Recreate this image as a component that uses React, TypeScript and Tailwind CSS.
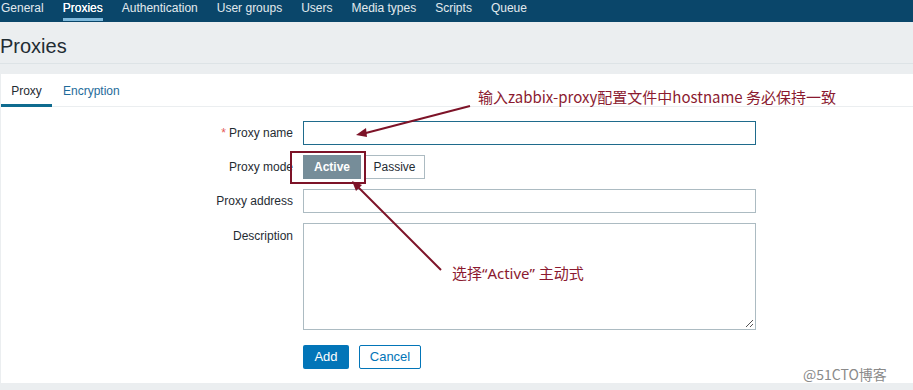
import React from "react";

const navItems = ["General", "Proxies", "Authentication", "User groups", "Users", "Media types", "Scripts", "Queue"];

export default function App() {
  return (
    <div
      className="relative w-[913px] h-[390px] overflow-hidden bg-[#ebeef0] text-[12px] text-[#1f2c33]"
      style={{ fontFamily: '"Liberation Sans", Arial, sans-serif' }}
    >
      {/* top nav */}
      <div className="h-[22px] bg-[#0a466a] flex items-stretch pl-[1px] gap-[19px]">
        {navItems.map((n) => (
          <div
            key={n}
            className={
              "relative flex items-start pt-[1px] leading-[14px] text-[12px] " +
              (n === "Proxies" ? "text-white [text-shadow:0_0_0.4px_#fff]" : "text-[#e2eaee]")
            }
          >
            {n}
            {n === "Proxies" && (
              <span className="absolute left-0 right-0 bottom-[1px] h-[3px] bg-[#7eb9db]" />
            )}
          </div>
        ))}
      </div>

      {/* title */}
      <div className="h-[42px] border-b border-[#dde3e6] flex items-center pt-[6px]">
        <h1 className="text-[20px] leading-[22px] text-[#1f2c33]">Proxies</h1>
      </div>

      {/* content */}
      <div className="mt-[10px] ml-[1px] h-[309px] bg-white">
        <div className="h-[33px] border-b border-[#ebeef0] flex items-stretch">
          <div className="relative w-[51px] flex items-center justify-center pt-[1px] text-[#1f2c33]">
            Proxy
            <span className="absolute left-0 right-0 bottom-[-1px] h-[3px] bg-[#0f6b8f]" />
          </div>
          <div className="px-[11px] flex items-center pt-[1px] text-[#1f6b9a]">Encryption</div>
        </div>

        <div className="pt-[14px] flex flex-col gap-[10px]">
          <div className="flex items-center">
            <div className="w-[292px] text-right pr-0">
              <span className="text-[#e45959] mr-[3px]">*</span>Proxy name
            </div>
            <div className="ml-[10px] w-[453px] h-[24px] border border-[#1f6b8c] bg-white" />
          </div>
          <div className="flex items-center">
            <div className="w-[292px] text-right">Proxy mode</div>
            <div className="ml-[10px] flex h-[24px]">
              <div className="w-[58px] h-full bg-[#768d99] border border-[#768d99] text-white font-bold flex items-center justify-center">
                Active
              </div>
              <div className="ml-[3px] w-[61px] h-full bg-white border border-[#acbbc2] flex items-center justify-center">
                Passive
              </div>
            </div>
          </div>
          <div className="flex items-center">
            <div className="w-[292px] text-right">Proxy address</div>
            <div className="ml-[10px] w-[453px] h-[24px] border border-[#acbbc2] bg-white" />
          </div>
          <div className="flex items-start">
            <div className="w-[292px] text-right pt-[4px]">Description</div>
            <div className="relative ml-[10px] w-[453px] h-[107px] border border-[#acbbc2] bg-white">
              <svg className="absolute right-[1px] bottom-[1px]" width="9" height="9" viewBox="0 0 9 9">
                <line x1="1" y1="8" x2="8" y2="1" stroke="#555" strokeWidth="1" />
                <line x1="5" y1="8" x2="8" y2="5" stroke="#555" strokeWidth="1" />
              </svg>
            </div>
          </div>
          <div className="flex items-center mt-[5px]">
            <div className="w-[292px]" />
            <div className="ml-[10px] flex gap-[10px] h-[24px]">
              <div className="w-[46px] h-full bg-[#0275b8] rounded-[2px] text-white text-[13px] flex items-center justify-center">
                Add
              </div>
              <div className="w-[62px] h-full bg-white border border-[#0275b8] rounded-[2px] text-[#0275b8] text-[13px] flex items-center justify-center">
                Cancel
              </div>
            </div>
          </div>
        </div>
      </div>

      {/* annotations overlay */}
      <svg className="absolute left-0 top-0 pointer-events-none" width="913" height="390">
        <rect x="291" y="152" width="74" height="31" fill="none" stroke="#7d1328" strokeWidth="2" />
        <line x1="470" y1="106" x2="362" y2="134" stroke="#7d1328" strokeWidth="2" />
        <polygon points="356,135 366,128 367,137" fill="#7d1328" />
        <line x1="441" y1="270" x2="356" y2="185" stroke="#7d1328" strokeWidth="2" />
        <polygon points="352,181 362,185 356,191" fill="#7d1328" />
      </svg>
      <div
        className="absolute left-[478px] top-[87px] text-[15px] leading-[20px] text-[#8b1a30] whitespace-nowrap"
        style={{ fontFamily: '"Noto Sans CJK SC", "Noto Sans", sans-serif' }}
      >
        输入zabbix-proxy配置文件中hostname 务必保持一致
      </div>
      <div
        className="absolute left-[452px] top-[263px] text-[15px] leading-[20px] text-[#8b1a30] whitespace-nowrap"
        style={{ fontFamily: '"Noto Sans CJK SC", "Noto Sans", sans-serif' }}
      >
        选择<span style={{ fontFamily: '"Noto Sans", sans-serif' }}>“Active” </span>主动式
      </div>
      <div
        className="absolute left-[803px] top-[364px] text-[14px] leading-[20px] text-[#8a8a8a] whitespace-nowrap"
        style={{ fontFamily: '"Noto Sans CJK SC", "Noto Sans", sans-serif' }}
      >
        @51CTO博客
      </div>
    </div>
  );
}
